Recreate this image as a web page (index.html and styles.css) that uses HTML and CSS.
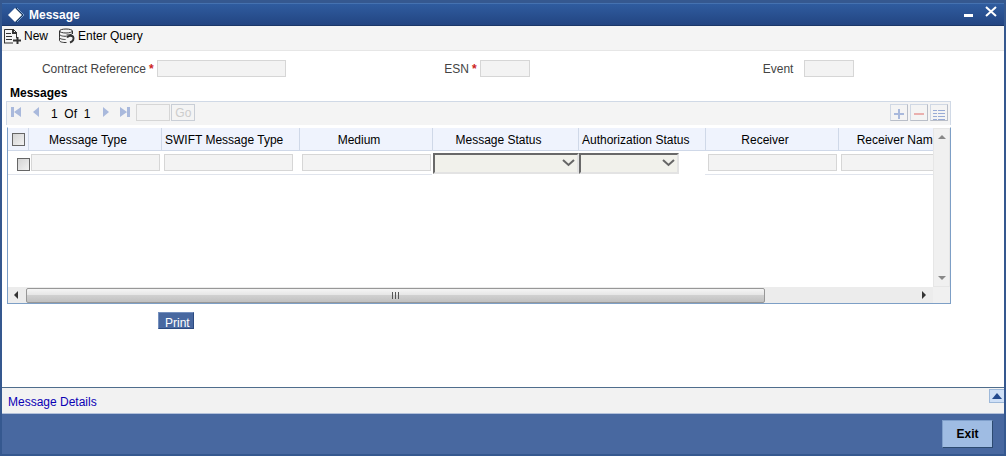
FILE: index.html
```html
<!DOCTYPE html>
<html lang="en">
<head>
    <meta charset="UTF-8">
    <meta name="viewport" content="width=device-width, initial-scale=1.0">
    <title>Message</title>
    <link rel="stylesheet" href="styles.css">
</head>
<body>
    <div class="window">
        <header class="titlebar">
            <svg class="logo" width="18" height="18" viewBox="0 0 18 18">
                <path d="M9 1l8 8-8 8z" fill="#16365f"/>
                <path d="M10 2l7 7-7 7" fill="none" stroke="#7fa3cf" stroke-width="1"/>
                <path d="M8 2l7 7-7 7-7-7z" fill="#fff"/>
            </svg>
            <h1 class="title">Message</h1>
            <button class="win-btn" aria-label="Minimize">
                <svg width="12" height="14" viewBox="0 0 12 14"><path d="M1 8h9v3H1z" fill="#fff"/></svg>
            </button>
            <button class="win-btn" aria-label="Close">
                <svg width="12" height="14" viewBox="0 0 12 14"><path d="M1 1l10 9M11 1L1 10" stroke="#fff" stroke-width="2"/></svg>
            </button>
        </header>

        <nav class="toolbar">
            <button class="tool">
                <svg width="18" height="16" viewBox="0 0 18 16" fill="none" stroke="#333">
                    <path d="M0.500 15V1.500h9l3 3V10" stroke-width="1"/>
                    <path d="M9 1v4h4" stroke-width="2"/>
                    <path d="M2 5.500h5M2 8.500h6M2 11.500h6M0 15h9" stroke-width="1"/>
                    <path d="M13.500 9v7M9 12.500h8" stroke-width="2"/>
                </svg>
                New
            </button>
            <button class="tool">
                <svg width="18" height="16" viewBox="0 0 18 16" fill="none" stroke="#333">
                    <ellipse cx="8" cy="3" rx="6.500" ry="2"/>
                    <path d="M1.500 3v3c0 1.500 3 2.500 7 2.200M14.500 3v3M1.500 6v3.500c0 1.300 3 2 6 2M1.500 9.500v3c0 1.300 3 2.200 7 2M14.500 5.500c-1 1-4 1.500-6 1.500"/>
                    <path d="M9 9.500c1.500-2 4-2.500 6-1 1.500 2.500 0 5-3 6" stroke-width="2"/>
                </svg>
                Enter Query
            </button>
        </nav>

        <main class="content">
            <div class="fields">
                <div class="field">
                    <label class="wide" for="contractRef">Contract Reference</label>
                    <span class="required">*</span>
                    <input class="box long" type="text" id="contractRef" disabled>
                </div>
                <div class="field">
                    <label for="esn">ESN</label>
                    <span class="required">*</span>
                    <input class="box short" type="text" id="esn" disabled>
                </div>
                <div class="field">
                    <label for="event">Event</label>
                    <span class="required"></span>
                    <input class="box short" type="text" id="event" disabled>
                </div>
            </div>

            <h2 class="section-title">Messages</h2>

            <div class="grid">
                <div class="pager">
                    <button class="nav-btn" aria-label="First"><svg width="12" height="12" viewBox="0 0 12 12"><path d="M0 1h3v10H0zM10 1v10L3 6z"/></svg></button>
                    <button class="nav-btn" aria-label="Previous"><svg width="12" height="12" viewBox="0 0 12 12"><path d="M8 1v10L2 6z"/></svg></button>
                    <span class="page-count">1&nbsp; Of&nbsp; 1</span>
                    <button class="nav-btn" aria-label="Next"><svg width="12" height="12" viewBox="0 0 12 12"><path d="M4 1v10l6-5z"/></svg></button>
                    <button class="nav-btn" aria-label="Last"><svg width="12" height="12" viewBox="0 0 12 12"><path d="M8 1h3v10H8zM1 1v10l7-5z"/></svg></button>
                    <input class="box page" type="text" aria-label="Page" disabled>
                    <button class="go" disabled>Go</button>
                    <div class="row-tools">
                        <button class="icon-btn" aria-label="Add row"><svg width="14" height="14" viewBox="0 0 14 14"><path d="M7 3v10M2 8h10" stroke="#a9b9dc" stroke-width="2"/></svg></button>
                        <button class="icon-btn" aria-label="Delete row"><svg width="14" height="14" viewBox="0 0 14 14"><path d="M2 8h10" stroke="#eab0ae" stroke-width="2"/></svg></button>
                        <button class="icon-btn" aria-label="Single view"><svg width="14" height="14" viewBox="0 0 14 14"><path d="M1 4.500h4M6 4.500h7M1 7.500h4M6 7.500h7M1 10.500h4M6 10.500h7M1 13.500h4M6 13.500h7" stroke="#98abd6"/></svg></button>
                    </div>
                </div>

                <div class="table-frame">
                    <div class="table-view">
                        <table class="messages">
                            <colgroup>
                                <col class="c-check"><col class="c-std"><col class="c-swift"><col class="c-std">
                                <col class="c-status"><col class="c-auth"><col class="c-std"><col class="c-std">
                            </colgroup>
                            <thead>
                                <tr>
                                    <th><input class="check" type="checkbox" aria-label="Select all"></th>
                                    <th>Message Type</th>
                                    <th class="left">SWIFT Message Type</th>
                                    <th>Medium</th>
                                    <th>Message Status</th>
                                    <th class="left">Authorization Status</th>
                                    <th>Receiver</th>
                                    <th>Receiver Name</th>
                                </tr>
                            </thead>
                            <tbody>
                                <tr>
                                    <td class="check-cell"><input class="check" type="checkbox" aria-label="Select row"></td>
                                    <td><input class="box long" type="text" aria-label="Message Type" disabled></td>
                                    <td><input class="box long" type="text" aria-label="SWIFT Message Type" disabled></td>
                                    <td><input class="box long" type="text" aria-label="Medium" disabled></td>
                                    <td class="select-cell">
                                        <div class="drop">
                                            <select aria-label="Message Status" disabled><option></option></select>
                                            <svg width="13" height="9" viewBox="0 0 13 9"><path d="M1 1l5.500 5L12 1"/></svg>
                                        </div>
                                    </td>
                                    <td class="select-cell">
                                        <div class="drop narrow">
                                            <select aria-label="Authorization Status" disabled><option></option></select>
                                            <svg width="13" height="9" viewBox="0 0 13 9"><path d="M1 1l5.500 5L12 1"/></svg>
                                        </div>
                                    </td>
                                    <td><input class="box long" type="text" aria-label="Receiver" disabled></td>
                                    <td><input class="box long" type="text" aria-label="Receiver Name" disabled></td>
                                </tr>
                            </tbody>
                        </table>
                    </div>
                    <div class="vscroll">
                        <svg width="8" height="4" viewBox="0 0 8 4"><path d="M4 0l4 4H0z" fill="#888"/></svg>
                        <svg width="8" height="4" viewBox="0 0 8 4"><path d="M0 0h8L4 4z" fill="#888"/></svg>
                    </div>
                    <div class="hscroll">
                        <svg width="4" height="8" viewBox="0 0 4 8"><path d="M4 0v8L0 4z" fill="#333"/></svg>
                        <div class="track">
                            <div class="thumb"><i></i><i></i><i></i></div>
                        </div>
                        <svg width="4" height="8" viewBox="0 0 4 8"><path d="M0 0l4 4-4 4z" fill="#333"/></svg>
                    </div>
                    <div class="corner"></div>
                </div>
            </div>

            <button class="print">Print</button>
        </main>

        <div class="details">
            <a href="#">Message Details</a>
            <button class="expand" aria-label="Expand"><svg width="10" height="6" viewBox="0 0 10 6"><path d="M5 0l5 6H0z" fill="#234a8f"/></svg></button>
        </div>

        <footer class="footer">
            <button class="exit">Exit</button>
        </footer>
    </div>
</body>
</html>
```

FILE: styles.css
```css
* {
    box-sizing: border-box;
}

body {
    margin: 0;
    font-family: "Liberation Sans", Arial, sans-serif;
    font-size: 12px;
    line-height: 16px;
    color: #000;
}

button, input, select {
    margin: 0;
    padding: 0;
    font: inherit;
}

button {
    border: none;
    background: none;
    cursor: pointer;
}

svg {
    display: block;
    flex: none;
}

.window {
    display: flex;
    flex-direction: column;
    min-height: 100vh;
    border: 2px solid #35588f;
    border-top-width: 3px;
    background-color: #fff;
}

/* title bar */
.titlebar {
    display: flex;
    align-items: center;
    height: 23px;
    padding: 0 7px 0 5px;
    border-top: 1px solid #4572b0;
    border-bottom: 1px solid #1b3768;
    background: linear-gradient(#2f5c9f, #234582);
}

.title {
    flex: 1;
    margin: 0 0 0 4px;
    font-size: 12px;
    font-weight: bold;
    color: #fff;
}

.win-btn {
    height: 20px;
    margin-left: 10px;
    padding-bottom: 4px;
}

/* toolbar */
.toolbar {
    display: flex;
    align-items: center;
    gap: 10px;
    height: 25px;
    padding: 0 2px 5px;
    border-bottom: 1px solid #e6e6e6;
    background-color: #f4f4f4;
}

.tool {
    display: flex;
    align-items: center;
    gap: 2px;
}

/* header fields */
.content {
    flex: 1;
}

.fields {
    display: grid;
    grid-template-columns: 42% 33% 25%;
    padding: 9px 0 8px 37px;
}

.field {
    display: flex;
    align-items: center;
    color: #444;
}

.field .wide {
    width: 107px;
    text-align: right;
}

.required {
    width: 11px;
    padding-left: 3px;
    font-weight: bold;
    color: #c22;
}

.box {
    display: block;
    height: 17px;
    border: 1px solid #d6d6d6;
    border-radius: 0;
    background-color: #f3f3f3;
}

.long {
    width: 129px;
}

.short {
    width: 50px;
}

.section-title {
    margin: 0 0 0 8px;
    font-size: 12px;
}

/* messages grid */
.grid {
    margin: 0 53px 0 4px;
}

.pager {
    display: flex;
    align-items: center;
    height: 24px;
    padding: 0 2px 2px 4px;
    border: 1px solid #d0d9e6;
    border-bottom: none;
    background-color: #f4f4f4;
}

.nav-btn {
    padding-bottom: 2px;
}

.nav-btn svg {
    fill: #a9b9dc;
}

.nav-btn + .nav-btn {
    margin-left: 8px;
}

.page-count {
    margin: 2px 9px 0 8px;
}

.page {
    width: 34px;
    margin-left: 5px;
}

.go {
    height: 17px;
    margin-left: 1px;
    padding: 0 3px;
    border: 1px solid #c9ced6;
    line-height: 17px;
    color: #ccc;
}

.row-tools {
    display: flex;
    gap: 2px;
    margin-left: auto;
}

.icon-btn {
    width: 18px;
    height: 17px;
    padding: 0 1px;
    border: 1px solid #c3ccd9;
    border-color: #d0d8e4 #b9bec8 #b9bec8 #d0d8e4;
}

.table-frame {
    display: grid;
    grid-template-columns: minmax(0, 1fr) 17px;
    grid-template-rows: 159px 16px;
    margin: 2px 0 0 1px;
    border: 1px solid #7d9fc6;
    border-top-color: #fff;
}

.table-view {
    overflow: hidden;
}

.messages {
    width: 963px;
    table-layout: fixed;
    border-collapse: separate;
    border-spacing: 0;
}

.c-check {
    width: 20px;
}

.c-std {
    width: 133px;
}

.c-swift {
    width: 138px;
}

.c-status {
    width: 146px;
}

.c-auth {
    width: 127px;
}

.messages th {
    height: 23px;
    padding: 1px 14px 0 0;
    border-left: 1px solid #cfd8e8;
    border-bottom: 1px solid #cfd8e8;
    background-color: #eff3fd;
    font-weight: normal;
    white-space: nowrap;
}

.messages th:first-child {
    padding: 0 0 0 4px;
    border-left: none;
}

.messages th.left {
    padding-left: 3px;
    padding-right: 0;
    text-align: left;
}

.messages td {
    height: 24px;
    padding: 0 0 0 3px;
    border-bottom: 1px solid #e0e4ec;
}

.messages .check-cell {
    padding: 4px 0 0 9px;
}

.messages .select-cell {
    padding: 0 0 0 1px;
    border-bottom: none;
}

.check {
    display: block;
    width: 13px;
    height: 13px;
    border: 1px solid #666;
    background: linear-gradient(135deg, #d4d4d4, #f2f2f2);
    appearance: none;
}

.drop {
    position: relative;
    width: 146px;
}

.drop.narrow {
    width: 100px;
}

.drop select {
    display: block;
    width: 100%;
    height: 21px;
    border: 2px solid;
    border-color: #696969 #e3e3e3 #e3e3e3 #696969;
    border-radius: 0;
    background-color: #f1f1eb;
    opacity: 1;
    appearance: none;
}

.drop svg {
    position: absolute;
    top: 6px;
    right: 4px;
    fill: none;
    stroke: #666;
    stroke-width: 2;
    pointer-events: none;
}

/* scroll bars */
.vscroll {
    display: flex;
    flex-direction: column;
    align-items: center;
    justify-content: space-between;
    padding: 6px 0;
    border: 1px solid #e6e6e6;
    background-color: #f0f0f0;
}

.hscroll {
    display: flex;
    align-items: center;
    padding: 0 7px 0 6px;
    background-color: #ececec;
}

.track {
    flex: 1;
    padding: 0 16px 0 8px;
}

.thumb {
    display: flex;
    align-items: center;
    justify-content: center;
    gap: 2px;
    width: 84%;
    height: 15px;
    border: 1px solid #979797;
    border-radius: 2px;
    background: linear-gradient(#f5f5f5, #e6e6e6 45%, #d0d0d0 50%, #c0c0c0);
}

.thumb i {
    width: 1px;
    height: 7px;
    background-color: #555;
}

.corner {
    background-color: #f0f0f0;
}

.print {
    display: block;
    height: 17px;
    margin: 8px 0 8px 156px;
    padding: 2px 3px 0 6px;
    border: 1px solid #2c4a80;
    border-color: #7590be #2c4a80 #2c4a80 #7590be;
    background-color: #4868a0;
    color: #fff;
}

/* bottom bars */
.details {
    display: flex;
    justify-content: space-between;
    height: 27px;
    padding-left: 6px;
    border-top: 1px solid #4f6d8c;
    border-bottom: 1px solid #b3c1da;
    background-color: #f2f2f2;
}

.details a {
    align-self: center;
    padding-top: 3px;
    color: #0a00b4;
    text-decoration: none;
}

.expand {
    width: 15px;
    height: 14px;
    margin-top: 1px;
    padding: 0 2px;
    border: 1px solid #9db8d9;
    border-right: none;
    background-color: #cfe0f7;
}

.footer {
    display: flex;
    align-items: center;
    justify-content: flex-end;
    height: 40px;
    padding-right: 11px;
    background-color: #4868a0;
}

.exit {
    width: 51px;
    height: 28px;
    border: 1px solid #2c4a70;
    border-color: #7f9fcb #2c4a70 #2c4a70 #7f9fcb;
    background-color: #9fbce3;
    font-weight: bold;
}
```
